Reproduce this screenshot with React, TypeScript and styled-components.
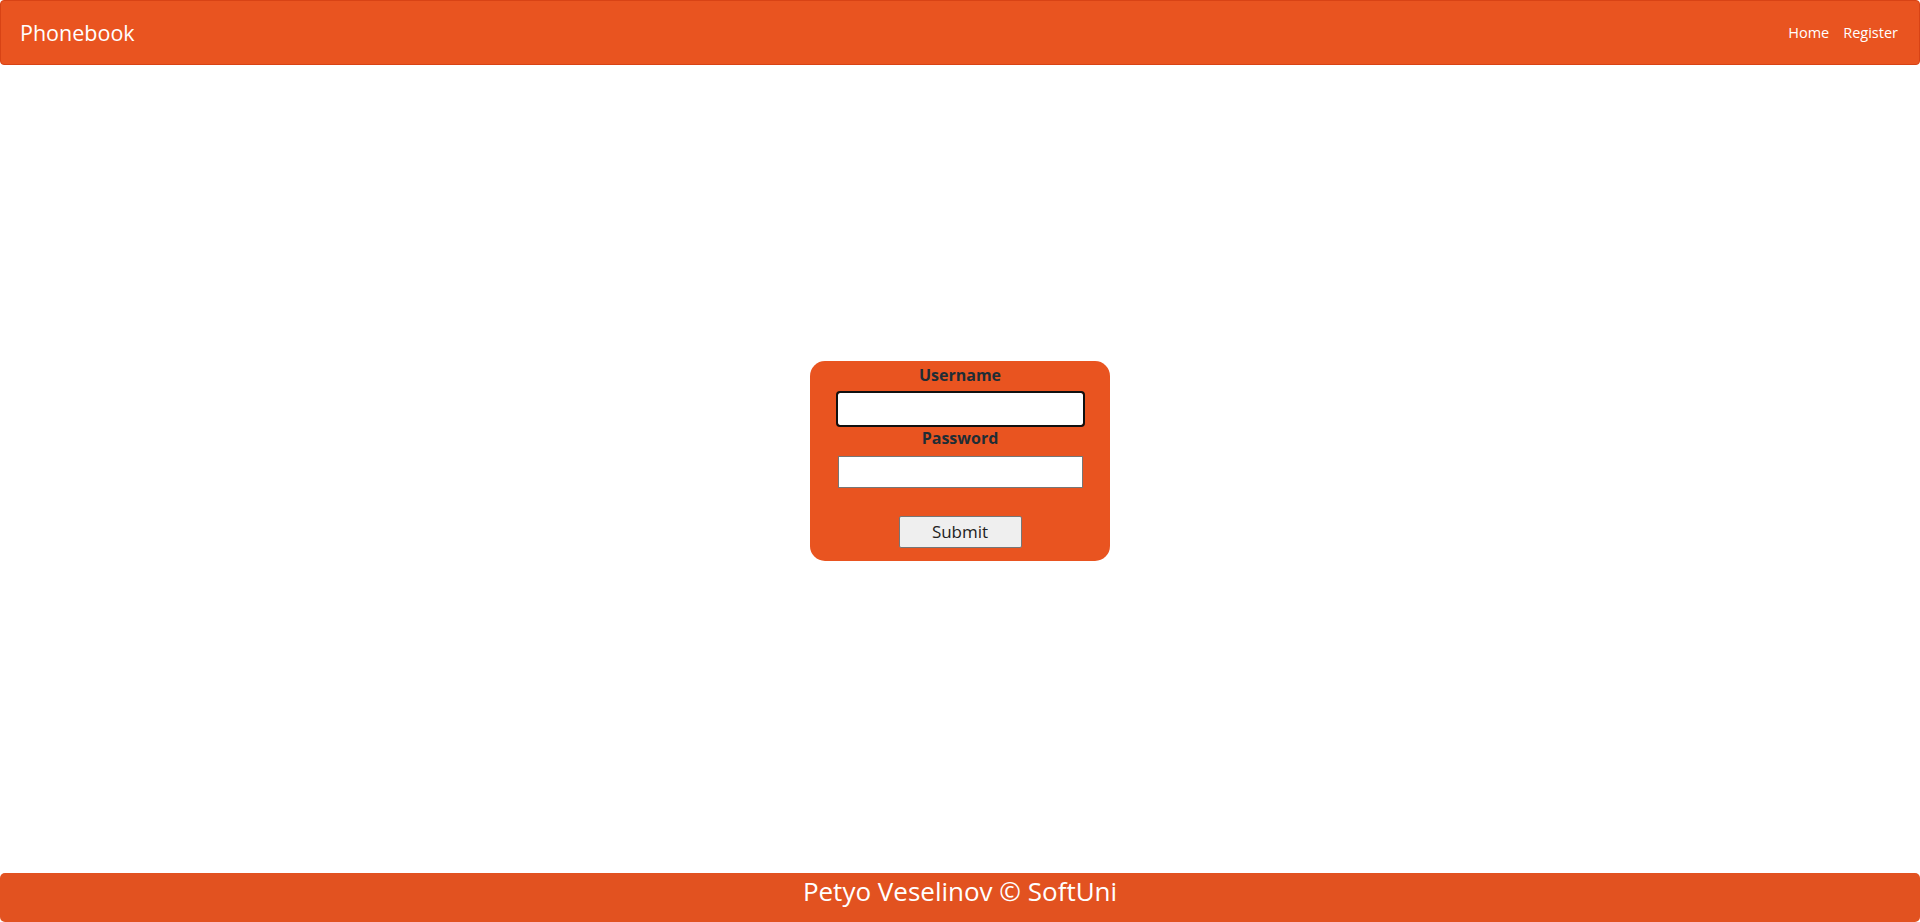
import React from "react";
import styled, { createGlobalStyle } from "styled-components";

const Global = createGlobalStyle`
  html, body { margin: 0; padding: 0; height: 100%; }
  body {
    font-family: "Open Sans", "Noto Sans", Arial, sans-serif;
    color: #333;
    background: #fff;
  }
  #root { height: 100%; }
  * { box-sizing: border-box; }
`;

const Page = styled.div`
  display: flex;
  flex-direction: column;
  height: 922px;
`;

const NavBar = styled.nav`
  height: 65px;
  flex: 0 0 65px;
  background: #e95420;
  border: 1px solid #d84315;
  border-radius: 4px;
  display: flex;
  align-items: center;
  justify-content: space-between;
  padding: 0 21px 0 19px;
`;

const Brand = styled.a`
  color: #fff;
  font-size: 21.5px;
  text-decoration: none;
`;

const NavLinks = styled.div`
  display: flex;
  gap: 14px;
`;

const NavLink = styled.a`
  color: #fff;
  font-size: 14.5px;
  text-decoration: none;
`;

const Main = styled.main`
  flex: 1;
  display: flex;
  align-items: center;
  justify-content: center;
  padding-bottom: 16px;
`;

const FormBox = styled.form`
  width: 300px;
  height: 200px;
  background: #e95420;
  border-radius: 15px;
  display: flex;
  flex-direction: column;
  align-items: center;
  padding-top: 4px;
`;

const Label = styled.label`
  font-weight: 700;
  font-size: 16px;
  color: #1e2d35;
  line-height: 20px;
  margin-bottom: 8px;
`;

const Input = styled.input<{ $focused?: boolean }>`
  width: 245px;
  height: 32px;
  border: 1px solid #767676;
  background: #fff;
  margin-bottom: 3px;
  font-size: 14px;
  ${(p) =>
    p.$focused
      ? `outline: 2px solid #101010; outline-offset: 0px; border-radius: 2px; border-color: #fff;`
      : `outline: none;`}
`;

const Submit = styled.button`
  margin-top: 25px;
  width: 123px;
  height: 32px;
  background: #efefef;
  border: 1px solid #767676;
  border-radius: 2px;
  font-family: inherit;
  font-size: 17px;
  color: #222;
  padding: 0 0 2px;
`;

const Footer = styled.footer`
  flex: 0 0 49px;
  height: 49px;
  background: #e25220;
  border-radius: 5px;
  display: flex;
  align-items: center;
  justify-content: center;
  color: #fff;
  font-size: 26px;
  padding-bottom: 13px;
`;

export default function App() {
  return (
    <>
      <Global />
      <Page>
        <NavBar>
          <Brand href="#">Phonebook</Brand>
          <NavLinks>
            <NavLink href="#">Home</NavLink>
            <NavLink href="#">Register</NavLink>
          </NavLinks>
        </NavBar>
        <Main>
          <FormBox onSubmit={(e) => e.preventDefault()}>
            <Label htmlFor="username">Username</Label>
            <Input id="username" type="text" $focused />
            <Label htmlFor="password">Password</Label>
            <Input id="password" type="password" />
            <Submit type="submit">Submit</Submit>
          </FormBox>
        </Main>
        <Footer>Petyo Veselinov © SoftUni</Footer>
      </Page>
    </>
  );
}
